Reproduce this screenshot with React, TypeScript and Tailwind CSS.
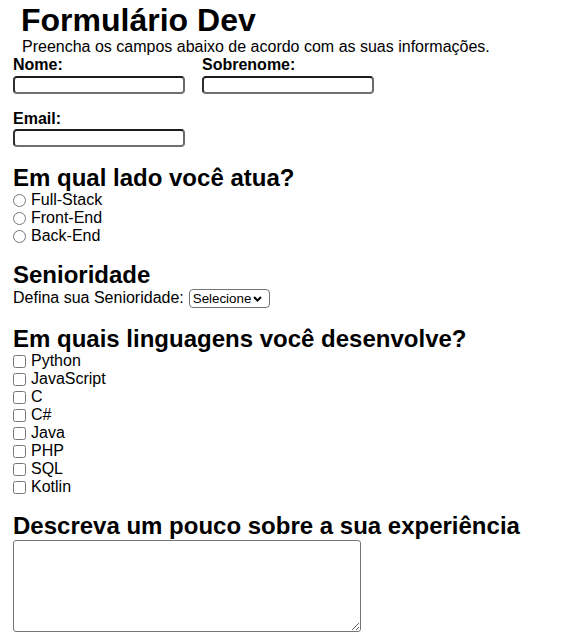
const langs = ["Python", "JavaScript", "C", "C#", "Java", "PHP", "SQL", "Kotlin"];
const lados = ["Full-Stack", "Front-End", "Back-End"];

const inputCls =
  "block w-[172px] h-[18px] mt-[2px] border-2 rounded-[4px] border-t-[#1c1c1c] border-l-[#2e2e2e] border-b-[#707070] border-r-[#6a6a6a] bg-white";

export default function App() {
  return (
    <div className="min-h-[639px] bg-white pl-[13px] pt-[2px] text-black font-['Liberation_Sans',Arial,sans-serif]">
      <h1 className="ml-[8px] text-[32px] font-bold leading-[36px]">Formulário Dev</h1>
      <p className="ml-[9px] text-[16px] leading-[18px]">
        Preencha os campos abaixo de acordo com as suas informações.
      </p>

      {/* nome / sobrenome */}
      <div className="flex gap-[17px]">
        <div>
          <label className="block text-[16px] font-bold leading-[18px]">Nome:</label>
          <input type="text" className={inputCls} />
        </div>
        <div>
          <label className="block text-[16px] font-bold leading-[18px]">Sobrenome:</label>
          <input type="text" className={inputCls} />
        </div>
      </div>

      <div className="mt-[16px]">
        <label className="block text-[16px] font-bold leading-[18px]">Email:</label>
        <input type="email" className={inputCls.replace("mt-[2px]", "mt-[1px]")} />
      </div>

      {/* lado */}
      <h2 className="mt-[17px] text-[24px] font-bold leading-[27px]">Em qual lado você atua?</h2>
      <div className="flex flex-col">
        {lados.map((l) => (
          <label key={l} className="flex items-center h-[18px] text-[16px]">
            <input type="radio" name="lado" className="m-0 mr-[5px] w-[13px] h-[13px]" />
            {l}
          </label>
        ))}
      </div>

      {/* senioridade */}
      <h2 className="mt-[16px] text-[24px] font-bold leading-[27px]">Senioridade</h2>
      <div className="flex items-center h-[20px] text-[16px]">
        <span>Defina sua Senioridade:</span>
        <div className="relative ml-[5px]">
          <select className="block appearance-none w-[81px] h-[19px] pl-[3px] border border-[#767676] rounded-[4px] bg-white text-[13.33px] leading-[17px]">
            <option>Selecione</option>
          </select>
          <svg
            className="absolute right-[8px] top-[7px] pointer-events-none"
            width="9"
            height="6"
            viewBox="0 0 9 6"
          >
            <polyline points="1,1 4.5,4.5 8,1" fill="none" stroke="#000" strokeWidth="2" />
          </svg>
        </div>
      </div>

      {/* linguagens */}
      <h2 className="mt-[17px] text-[24px] font-bold leading-[27px]">
        Em quais linguagens você desenvolve?
      </h2>
      <div className="flex flex-col">
        {langs.map((l) => (
          <label key={l} className="flex items-center h-[18px] text-[16px]">
            <input type="checkbox" className="m-0 mr-[5px] w-[13px] h-[13px]" />
            {l}
          </label>
        ))}
      </div>

      {/* experiencia */}
      <h2 className="mt-[16px] text-[24px] font-bold leading-[27px]">
        Descreva um pouco sobre a sua experiência
      </h2>
      <textarea className="block mt-[1px] w-[348px] h-[92px] border border-[#767676] rounded-[3px] bg-white" />
    </div>
  );
}
